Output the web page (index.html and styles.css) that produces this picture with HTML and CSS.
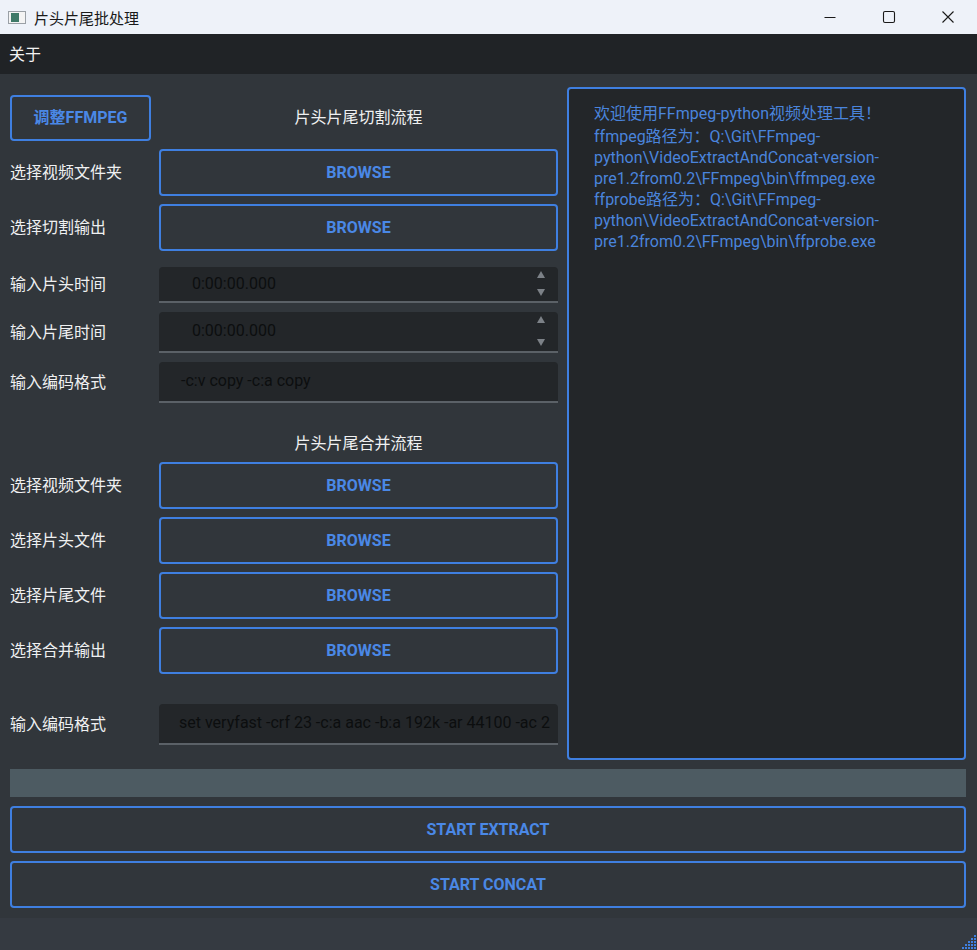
FILE: index.html
```html
<!DOCTYPE html>
<html lang="zh">
<head>
<meta charset="utf-8">
<title>片头片尾批处理</title>
<link rel="stylesheet" href="styles.css">
</head>
<body>
<div class="window">
  <div class="titlebar">
    <div class="app-icon"><span class="app-icon-fill"></span></div>
    <div class="title">片头片尾批处理</div>
    <div class="controls">
      <div class="ctl"><svg width="14" height="14" viewBox="0 0 14 14"><path d="M1.5 7.5h11" stroke="#1a1a1a" stroke-width="1"/></svg></div>
      <div class="ctl"><svg width="14" height="14" viewBox="0 0 14 14"><rect x="1.5" y="1.5" width="11" height="11" rx="1.5" fill="none" stroke="#1a1a1a" stroke-width="1.1"/></svg></div>
      <div class="ctl"><svg width="14" height="14" viewBox="0 0 14 14"><path d="M1.5 1.5l11 11M12.5 1.5l-11 11" stroke="#1a1a1a" stroke-width="1.1"/></svg></div>
    </div>
  </div>
  <div class="menubar"><span class="menu-item">关于</span></div>
  <div class="main">
    <div class="top">
      <div class="left">
        <div class="row r-head">
          <button class="btn btn-small">调整FFMPEG</button>
          <div class="section">片头片尾切割流程</div>
        </div>
        <div class="row r-btn"><div class="label">选择视频文件夹</div><button class="btn field">BROWSE</button></div>
        <div class="row r-btn"><div class="label">选择切割输出</div><button class="btn field">BROWSE</button></div>
        <div class="row r-spin1"><div class="label">输入片头时间</div>
          <div class="input field spin"><span class="val">0:00:00.000</span><span class="arrows"><span class="up"></span><span class="down"></span></span></div></div>
        <div class="row r-spin2"><div class="label">输入片尾时间</div>
          <div class="input field spin"><span class="val">0:00:00.000</span><span class="arrows"><span class="up"></span><span class="down"></span></span></div></div>
        <div class="row r-edit"><div class="label">输入编码格式</div>
          <div class="input field edit"><span class="val">-c:v copy -c:a copy</span></div></div>
        <div class="row r-sec"><div class="label"></div><div class="section field-sec">片头片尾合并流程</div></div>
        <div class="row r-btn"><div class="label">选择视频文件夹</div><button class="btn field">BROWSE</button></div>
        <div class="row r-btn"><div class="label">选择片头文件</div><button class="btn field">BROWSE</button></div>
        <div class="row r-btn"><div class="label">选择片尾文件</div><button class="btn field">BROWSE</button></div>
        <div class="row r-btn"><div class="label">选择合并输出</div><button class="btn field">BROWSE</button></div>
        <div class="row r-edit2"><div class="label">输入编码格式</div>
          <div class="input field edit"><span class="val val2">set veryfast -crf 23 -c:a aac -b:a 192k -ar 44100 -ac 2</span></div></div>
      </div>
      <div class="log"><div class="log-first">欢迎使用FFmpeg-python视频处理工具！</div>ffmpeg路径为：Q:\Git\FFmpeg-<br>python\VideoExtractAndConcat-version-<br>pre1.2from0.2\FFmpeg\bin\ffmpeg.exe<br>ffprobe路径为：Q:\Git\FFmpeg-<br>python\VideoExtractAndConcat-version-<br>pre1.2from0.2\FFmpeg\bin\ffprobe.exe</div>
    </div>
    <div class="progress"></div>
    <button class="btn wide">START EXTRACT</button>
    <button class="btn wide">START CONCAT</button>
  </div>
  <div class="statusbar">
    <svg class="grip" width="18" height="18" viewBox="0 0 18 18">
      <g fill="#3f7fe0">
        <rect x="15" y="3" width="2" height="2"/>
        <rect x="12" y="6" width="2" height="2"/><rect x="15" y="6" width="2" height="2"/>
        <rect x="9" y="9" width="2" height="2"/><rect x="12" y="9" width="2" height="2"/><rect x="15" y="9" width="2" height="2"/>
        <rect x="6" y="12" width="2" height="2"/><rect x="9" y="12" width="2" height="2"/><rect x="12" y="12" width="2" height="2"/><rect x="15" y="12" width="2" height="2"/>
        <rect x="3" y="15" width="2" height="2"/><rect x="6" y="15" width="2" height="2"/><rect x="9" y="15" width="2" height="2"/><rect x="12" y="15" width="2" height="2"/><rect x="15" y="15" width="2" height="2"/>
      </g>
    </svg>
  </div>
</div>
</body>
</html>
```

FILE: styles.css
```css
* { box-sizing: border-box; }
html, body { margin: 0; padding: 0; }
body {
  width: 977px;
  height: 950px;
  overflow: hidden;
  font-family: Roboto, "Noto Sans CJK SC", sans-serif;
  background: #31363b;
}
.window { width: 977px; height: 950px; display: flex; flex-direction: column; }

.titlebar {
  height: 34px;
  background: #eef2f9;
  display: flex;
  align-items: center;
  padding-left: 8px;
}
.app-icon {
  width: 18px; height: 13px;
  border: 1px solid #9aa0a6;
  background: #f4f4f4;
  display: flex; align-items: center; padding-left: 2px;
  margin-right: 8px;
}
.app-icon-fill { width: 8px; height: 9px; background: #3f7a68; display: block; }
.title { font-family: "Noto Sans CJK SC", sans-serif; font-size: 15px; color: #1a1a1a; flex: 1; }
.controls { display: flex; height: 34px; }
.ctl { width: 59px; height: 34px; display: flex; align-items: center; justify-content: center; }

.menubar {
  height: 40px;
  background: #202326;
  display: flex;
  align-items: center;
  padding-left: 9px;
  padding-bottom: 2px;
}
.menu-item { font-family: "Noto Sans CJK SC", sans-serif; font-size: 16px; color: #f2f2f2; }

.main {
  height: 844px;
  padding: 13px 11px 0 10px;
  display: flex;
  flex-direction: column;
}
.top { display: flex; gap: 9px; height: 673px; }
.left { width: 548px; display: flex; flex-direction: column; padding-top: 8px; }
.row { display: flex; align-items: center; }
.label {
  width: 149px;
  flex: none;
  font-family: "Noto Sans CJK SC", sans-serif;
  font-size: 16px;
  color: #eff0f1;
  padding-bottom: 4px;
}
.field { width: 399px; flex: none; }

.btn {
  background: transparent;
  border: 2px solid #3f7fe0;
  border-radius: 4px;
  color: #4a88e6;
  font-family: Roboto, "Noto Sans CJK SC", sans-serif;
  font-weight: 700;
  font-size: 16px;
  padding: 0;
  margin: 0;
}
.btn-small { width: 141px; height: 46px; margin-right: 8px; padding-bottom: 4px; }
.section {
  font-family: "Noto Sans CJK SC", sans-serif;
  font-size: 16px;
  color: #eff0f1;
  text-align: center;
  flex: 1;
  padding-bottom: 4px;
}
.r-head { height: 46px; }
.r-btn { height: 47px; margin-top: 8px; }
.r-btn .btn { height: 47px; }

.input {
  background: #232629;
  border-radius: 4px 4px 0 0;
  border-bottom: 2px solid #5b6167;
  position: relative;
  display: flex;
  align-items: center;
}
.val { font-size: 16px; color: #0c0e0f; white-space: nowrap; }
.spin .val { padding-left: 33px; margin-top: -2px; }
.edit .val { padding-left: 22px; margin-top: -3px; }
.edit { overflow: hidden; }
.val2 { padding-left: 20px !important; }

.r-spin1 { height: 36px; margin-top: 16px; }
.r-spin1 .input { height: 36px; }
.r-spin2 { height: 41px; margin-top: 9px; }
.r-spin2 .input { height: 41px; }
.r-edit { height: 41px; margin-top: 9px; }
.r-edit .input { height: 41px; }
.r-sec { height: 30px; margin-top: 26px; }
.field-sec { flex: none; width: 399px; }
.r-sec + .r-btn { margin-top: 3px; }
.r-edit2 { height: 41px; margin-top: 30px; }
.r-edit2 .input { height: 41px; }

.arrows {
  position: absolute;
  right: 13px;
  top: 4px;
  bottom: 5px;
  display: flex;
  flex-direction: column;
  justify-content: space-between;
}
.up { width: 0; height: 0; border-left: 4.5px solid transparent; border-right: 4.5px solid transparent; border-bottom: 7px solid #7c8187; }
.down { width: 0; height: 0; border-left: 4.5px solid transparent; border-right: 4.5px solid transparent; border-top: 7px solid #7c8187; }

.log {
  width: 399px;
  height: 673px;
  background: #232629;
  border: 2px solid #3f7fe0;
  border-radius: 4px;
  padding: 14px 10px 0 25px;
  font-size: 16px;
  line-height: 21px;
  color: #4a84dc;
  white-space: nowrap;
}
.log-first { margin-bottom: 2px; }

.progress {
  margin-top: 9px;
  height: 28px;
  background: #4d5b62;
  width: 956px;
}
.wide { width: 956px; height: 47px; margin-top: 9px; font-size: 16px; }
.wide + .wide { margin-top: 8px; }

.statusbar {
  height: 32px;
  background: #353a41;
  display: flex;
  justify-content: flex-end;
  align-items: flex-end;
}
.grip { display: block; }
```
